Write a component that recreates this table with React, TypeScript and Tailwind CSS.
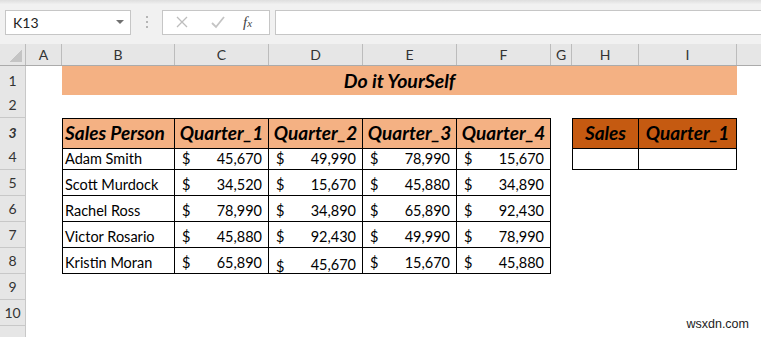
import React from 'react';

const GRID = 'grid grid-cols-[26px_36px_113px_94px_94px_94px_94px_21px_67px_98px_1fr]';

const SALES: [string, number, number, number, number][] = [
  ['Adam Smith', 45670, 49990, 78990, 15670],
  ['Scott Murdock', 34520, 15670, 45880, 34890],
  ['Rachel Ross', 78990, 34890, 65890, 92430],
  ['Victor Rosario', 45880, 92430, 49990, 78990],
  ['Kristin Moran', 65890, 45670, 15670, 45880],
];

const fmt = (n: number) => n.toLocaleString('en-US');

const RowHead = ({ n }: { n?: number }) => (
  <div className="flex items-center justify-center bg-[#e6e6e6] border-r border-b border-[#c8c8c8] text-[14px] text-[#333]">
    {n}
  </div>
);

const Money = ({ v, low }: { v: number; low?: boolean }) => (
  <div className="flex items-end justify-between border-r border-b border-black pl-[7px] pr-[6px] leading-[20px]">
    <span className={low ? 'translate-y-[4px]' : ''}>$</span>
    <span className={low ? 'translate-y-[2px]' : ''}>{fmt(v)}</span>
  </div>
);

const Toolbar = () => (
  <div className="h-[44px] bg-gradient-to-b from-[#dedede] via-[#f1f1f1] via-[10%] to-[#f1f1f1] flex items-center pl-[5px]">
    <div className="w-[126px] h-[25px] bg-white border border-[#c6c6c6] flex items-center justify-between pl-[7px] pr-[6px] text-[14px] text-[#222]">
      <span>K13</span>
      <span className="w-0 h-0 border-l-[4px] border-r-[4px] border-t-[4px] border-l-transparent border-r-transparent border-t-[#707070]" />
    </div>
    <div className="w-[31px] flex flex-col items-center gap-[3px]">
      <span className="w-[2px] h-[2px] bg-[#b5b5b5]" />
      <span className="w-[2px] h-[2px] bg-[#b5b5b5]" />
      <span className="w-[2px] h-[2px] bg-[#b5b5b5]" />
    </div>
    <div className="w-[108px] h-[25px] bg-white border border-[#c6c6c6] flex items-center">
      <svg width="14" height="14" viewBox="0 0 14 14" className="ml-[12px]">
        <path d="M2 2 L12 12 M12 2 L2 12" stroke="#bdbdbd" strokeWidth="1.3" fill="none" />
      </svg>
      <svg width="16" height="14" viewBox="0 0 16 14" className="ml-[21px]">
        <path d="M2 8 L6 12 L14 2" stroke="#c4c4c4" strokeWidth="1.8" fill="none" />
      </svg>
      <span className="ml-[17px] text-[15px] italic text-[#444] font-['Liberation_Serif',serif]">
        f<span className="text-[11px]">x</span>
      </span>
    </div>
    <div className="ml-[5px] flex-1 h-[25px] bg-white border border-[#c6c6c6] border-r-0" />
  </div>
);

const ColHeads = () => (
  <div className={`${GRID} h-[22px] bg-[#e6e6e6] border-b border-[#ababab] text-[14px] text-[#333]`}>
    <div className="relative border-r border-[#bcbcbc]">
      <span className="absolute right-[3px] bottom-[3px] w-[13px] h-[13px] bg-[linear-gradient(135deg,transparent_50%,#c4c4c4_50%)]" />
    </div>
    {['A', 'B', 'C', 'D', 'E', 'F', 'G', 'H', 'I'].map((c) => (
      <div key={c} className="flex items-center justify-center border-r border-[#bcbcbc]">
        {c}
      </div>
    ))}
    <div />
  </div>
);

export default function App() {
  return (
    <div className="relative w-[761px] h-[337px] overflow-hidden bg-white font-['Lato','Noto_Sans',sans-serif]">
      <Toolbar />
      <ColHeads />
      <div className="text-[14.5px] text-black">
        {/* row 1: title */}
        <div className={`${GRID} h-[26px]`}>
          <RowHead n={1} />
          <div />
          <div className="col-span-8 bg-[#f4b183] flex items-center justify-center font-bold italic text-[19.5px]">
            Do it YourSelf
          </div>
          <div />
        </div>
        {/* row 2 */}
        <div className={`${GRID} h-[26px]`}>
          <RowHead n={2} />
        </div>
        {/* row 3: headers */}
        <div className={`${GRID} h-[26px] font-bold italic text-[19px]`}>
          <RowHead n={3} />
          <div />
          <div className="bg-[#f4b183] border border-black flex items-center pl-[2px]">Sales Person</div>
          {['Quarter_1', 'Quarter_2', 'Quarter_3', 'Quarter_4'].map((q) => (
            <div key={q} className="bg-[#f4b183] border-t border-r border-b border-black flex items-center justify-center">
              {q}
            </div>
          ))}
          <div />
          <div className="bg-[#c55a11] border border-black flex items-center justify-center">Sales</div>
          <div className="bg-[#c55a11] border-t border-r border-b border-black flex items-center justify-center">Quarter_1</div>
          <div />
        </div>
        {/* rows 4-8: data */}
        {SALES.map(([name, q1, q2, q3, q4], i) => (
          <div key={name} className={`${GRID} h-[26px]`}>
            <RowHead n={i + 4} />
            <div />
            <div className="border-l border-r border-b border-black flex items-end pl-[2px] leading-[20px]">{name}</div>
            <Money v={q1} />
            <Money v={q2} low={i === 4} />
            <Money v={q3} />
            <Money v={q4} />
            <div />
            {i === 0 ? (
              <>
                <div className="border-l border-r border-b border-black" />
                <div className="border-r border-b border-black" />
              </>
            ) : (
              <>
                <div />
                <div />
              </>
            )}
            <div />
          </div>
        ))}
        {[9, 10, undefined].map((n, k) => (
          <div key={k} className={`${GRID} h-[26px]`}>
            <RowHead n={n} />
          </div>
        ))}
      </div>
      <div className="absolute right-[12px] bottom-[3px] text-[12.5px] text-[#222] font-['Liberation_Sans',sans-serif]">
        wsxdn.com
      </div>
    </div>
  );
}
